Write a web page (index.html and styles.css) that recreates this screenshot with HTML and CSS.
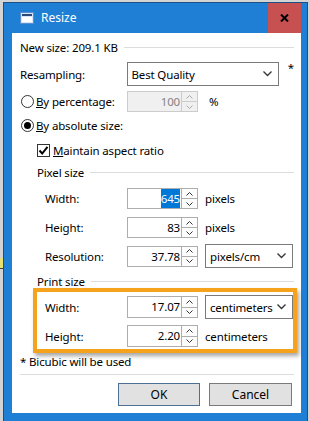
FILE: index.html
```html
<!DOCTYPE html>
<html>
<head>
<meta charset="utf-8">
<link rel="stylesheet" href="styles.css">
</head>
<body>
<div class="desktop">
  <div class="win">
    <div class="titlebar">
      <svg class="ticon" width="14" height="12" viewBox="0 0 14 12">
        <rect x="0.5" y="0.5" width="13" height="11" fill="#d6e6f6" stroke="#5a8fd0"/>
        <rect x="2" y="2" width="10" height="2" fill="#2a4a78"/>
        <rect x="2" y="5" width="10" height="5" fill="#ffffff"/>
      </svg>
      <span class="ttext">Resize</span>
      <div class="close">
        <svg width="9" height="8" viewBox="0 0 9 8"><path d="M1 0.5 L8 7.5 M8 0.5 L1 7.5" stroke="#000" stroke-width="2"/></svg>
      </div>
    </div>
    <div class="client">
      <div class="row r-newsize"><span>New size: 209.1 KB</span><span class="hline"></span></div>
      <div class="row r-resamp">
        <span class="lab w107">Resampling:</span>
        <div class="select s-best"><span>Best Quality</span><svg class="chev" width="9" height="6" viewBox="0 0 9 6"><path d="M0.5 0.5 L4.5 4.5 L8.5 0.5" fill="none" stroke="#333" stroke-width="1.3"/></svg></div>
        <span class="star">*</span>
      </div>
      <div class="row r-pct">
        <span class="radio"></span>
        <span class="lab w91"><u>B</u>y percentage:</span>
        <div class="spin disabled"><span class="val">100</span><div class="arrows"><span class="up"><svg width="7" height="4" viewBox="0 0 7 4"><path d="M0.5 3.5 L3.5 0.5 L6.5 3.5" fill="none" stroke="#aaa"/></svg></span><span class="dn"><svg width="7" height="4" viewBox="0 0 7 4"><path d="M0.5 0.5 L3.5 3.5 L6.5 0.5" fill="none" stroke="#aaa"/></svg></span></div></div>
        <span class="unit pct">%</span>
      </div>
      <div class="row r-abs">
        <span class="radio on"><span class="dot"></span></span>
        <span class="lab"><u>B</u>y absolute size:</span>
      </div>
      <div class="row r-maint">
        <span class="check"><svg width="11" height="11" viewBox="0 0 11 11"><path d="M1.5 5.5 L4.2 8.5 L9.5 1.8" fill="none" stroke="#000" stroke-width="2"/></svg></span>
        <span class="lab"><u>M</u>aintain aspect ratio</span>
      </div>
      <div class="row r-group g-pixel"><span>Pixel size</span><span class="hline"></span></div>
      <div class="row r-field r-w">
        <span class="lab flab">Width:</span>
        <div class="spin"><span class="val"><span class="sel">645</span></span><div class="arrows"><span class="up"><svg width="7" height="4" viewBox="0 0 7 4"><path d="M0.5 3.5 L3.5 0.5 L6.5 3.5" fill="none" stroke="#333"/></svg></span><span class="dn"><svg width="7" height="4" viewBox="0 0 7 4"><path d="M0.5 0.5 L3.5 3.5 L6.5 0.5" fill="none" stroke="#333"/></svg></span></div></div>
        <span class="unit">pixels</span>
      </div>
      <div class="row r-field r-h">
        <span class="lab flab">Height:</span>
        <div class="spin"><span class="val">83</span><div class="arrows"><span class="up"><svg width="7" height="4" viewBox="0 0 7 4"><path d="M0.5 3.5 L3.5 0.5 L6.5 3.5" fill="none" stroke="#333"/></svg></span><span class="dn"><svg width="7" height="4" viewBox="0 0 7 4"><path d="M0.5 0.5 L3.5 3.5 L6.5 0.5" fill="none" stroke="#333"/></svg></span></div></div>
        <span class="unit">pixels</span>
      </div>
      <div class="row r-field r-res">
        <span class="lab flab">Resolution:</span>
        <div class="spin"><span class="val">37.78</span><div class="arrows"><span class="up"><svg width="7" height="4" viewBox="0 0 7 4"><path d="M0.5 3.5 L3.5 0.5 L6.5 3.5" fill="none" stroke="#333"/></svg></span><span class="dn"><svg width="7" height="4" viewBox="0 0 7 4"><path d="M0.5 0.5 L3.5 3.5 L6.5 0.5" fill="none" stroke="#333"/></svg></span></div></div>
        <div class="select s-unit"><span>pixels/cm</span><svg class="chev" width="9" height="6" viewBox="0 0 9 6"><path d="M0.5 0.5 L4.5 4.5 L8.5 0.5" fill="none" stroke="#333" stroke-width="1.3"/></svg></div>
      </div>
      <div class="row r-group g-print"><span>Print size</span><span class="hline"></span></div>
      <div class="row r-field r-pw">
        <span class="lab flab">Width:</span>
        <div class="spin"><span class="val">17.07</span><div class="arrows"><span class="up"><svg width="7" height="4" viewBox="0 0 7 4"><path d="M0.5 3.5 L3.5 0.5 L6.5 3.5" fill="none" stroke="#333"/></svg></span><span class="dn"><svg width="7" height="4" viewBox="0 0 7 4"><path d="M0.5 0.5 L3.5 3.5 L6.5 0.5" fill="none" stroke="#333"/></svg></span></div></div>
        <div class="select s-unit"><span>centimeters</span><svg class="chev" width="9" height="6" viewBox="0 0 9 6"><path d="M0.5 0.5 L4.5 4.5 L8.5 0.5" fill="none" stroke="#333" stroke-width="1.3"/></svg></div>
      </div>
      <div class="row r-field r-ph">
        <span class="lab flab">Height:</span>
        <div class="spin"><span class="val">2.20</span><div class="arrows"><span class="up"><svg width="7" height="4" viewBox="0 0 7 4"><path d="M0.5 3.5 L3.5 0.5 L6.5 3.5" fill="none" stroke="#333"/></svg></span><span class="dn"><svg width="7" height="4" viewBox="0 0 7 4"><path d="M0.5 0.5 L3.5 3.5 L6.5 0.5" fill="none" stroke="#333"/></svg></span></div></div>
        <span class="unit">centimeters</span>
      </div>
      <div class="row r-note"><span>* Bicubic will be used</span></div>
      <div class="sep"></div>
      <div class="row r-btns">
        <button class="btn ok">OK</button>
        <button class="btn cancel">Cancel</button>
      </div>
      <div class="highlight"></div>
    </div>
  </div>
  <div class="bgbit"></div>
</div>
</body>
</html>
```

FILE: styles.css
```css
* { box-sizing: border-box; }
html, body { margin: 0; padding: 0; }
body {
  width: 310px;
  height: 421px;
  overflow: hidden;
  background: #d3d3d3;
  font-family: "Noto Sans", "DejaVu Sans", sans-serif;
  font-size: 11.5px;
  letter-spacing: -0.15px;
  color: #000;
}
.desktop { position: relative; padding: 2px 0 0 3px; }
.bgbit {
  position: absolute;
  left: 0;
  top: 258px;
  width: 3px;
  height: 11px;
  background: #e8e070;
  border-bottom: 1px solid #444;
}
.win {
  width: 305px;
  height: 430px;
  background: #1f7fd5;
  border: 1px solid #1b4f86;
  display: flex;
  flex-direction: column;
}
.titlebar {
  height: 30px;
  display: flex;
  align-items: center;
  color: #fff;
}
.ticon { margin-left: 16px; }
.ttext { margin-left: 7px; font-size: 12px; margin-top: -1px; letter-spacing: 0; }
.close {
  margin-left: auto;
  margin-right: 6px;
  width: 33px;
  height: 30px;
  background: #c75050;
  display: flex;
  align-items: center;
  justify-content: center;
  margin-top: -1px;
}
.client {
  position: relative;
  margin: 0 6px 0 8px;
  background: #fff;
  height: 380px;
  padding: 6px 7px 0 8px;
  display: flex;
  flex-direction: column;
}
.row { display: flex; align-items: center; white-space: nowrap; }
.hline { flex: 1; height: 1px; background: #dcdcdc; margin-left: 6px; }
.r-newsize { height: 16px; }
.r-resamp { height: 24px; margin-top: 7px; }
.lab.w107 { width: 107px; }
.select {
  border: 1px solid #7a7a7a;
  background: #fff;
  display: flex;
  align-items: center;
  padding-left: 4px;
  height: 24px;
}
.s-best { width: 153px; }
.chev { margin-left: auto; margin-right: 6px; flex: none; }
.star { margin-left: 9px; align-self: flex-start; margin-top: -2px; }
.r-pct { height: 21px; margin-top: 5px; }
.radio {
  width: 13px; height: 13px;
  border: 1px solid #333;
  border-radius: 50%;
  margin-left: 1px;
  background: #fff;
  display: flex;
  align-items: center;
  justify-content: center;
}
.radio .dot { width: 7px; height: 7px; border-radius: 50%; background: #000; }
.radio + .lab { margin-left: 2px; }
.lab.w91 { width: 91px; }
.spin {
  width: 71px;
  height: 21px;
  border: 1px solid #adadad;
  background: #fff;
  display: flex;
}
.spin .val {
  flex: 1;
  text-align: right;
  padding-right: 1px;
  line-height: 19px;
}
.sel { background: #0078d7; color: #fff; padding: 2px 0; }
.spin .arrows { width: 16px; display: flex; flex-direction: column; }
.spin .up, .spin .dn {
  flex: 1;
  border: 1px solid #adadad;
  background: #fdfdfd;
  display: flex;
  align-items: center;
  justify-content: center;
}
.spin .up { border-top: none; border-right: none; border-bottom: none; }
.spin .dn { border-right: none; border-bottom: none; }
.spin.disabled { background: #f0f0f0; border-color: #cccccc; color: #838383; }
.spin.disabled .up, .spin.disabled .dn { background: #f0f0f0; border-color: #cccccc; }
.unit { margin-left: 7px; }
.unit.pct { margin-left: 11px; }
.r-abs { height: 16px; margin-top: 5px; }
.r-maint { height: 16px; margin-top: 9px; padding-left: 17px; }
.check {
  width: 13px; height: 13px;
  border: 1px solid #333;
  display: flex; align-items: center; justify-content: center;
  margin-right: 3px;
}
.r-group { height: 16px; padding-left: 17px; }
.g-pixel { margin-top: 6px; }
.g-print { margin-top: 5px; }
.r-field { height: 21px; }
.flab { width: 82px; margin-left: 25px; }
.r-w { margin-top: 8px; }
.r-h { margin-top: 8px; }
.r-res { margin-top: 6px; height: 24px; }
.s-unit { width: 88px; margin-left: 7px; }
.r-pw { margin-top: 6px; height: 24px; }
.r-ph { margin-top: 6px; height: 22px; }
.r-ph .spin { height: 22px; }
.r-pw .spin { height: 22px; }
.r-note { height: 16px; margin-top: 6px; }
.sep { height: 1px; background: #dcdcdc; margin-top: 5px; }
.r-btns { margin-top: 8px; height: 23px; padding-left: 98px; }
.btn {
  font-family: inherit;
  font-size: 12px;
  width: 82px;
  height: 23px;
  background: #e1e1e1;
  border: 1px solid #7a7a7a;
  padding: 0;
  color: #000;
}
.btn.ok { border-color: #4d6f93; }
.btn.cancel { margin-left: 9px; width: 83px; }
.highlight {
  position: absolute;
  left: 21px;
  top: 255px;
  width: 264px;
  height: 65px;
  border: 4px solid #f5a31c;
  box-shadow: 2px 3px 4px rgba(0,0,0,0.35);
}
```
